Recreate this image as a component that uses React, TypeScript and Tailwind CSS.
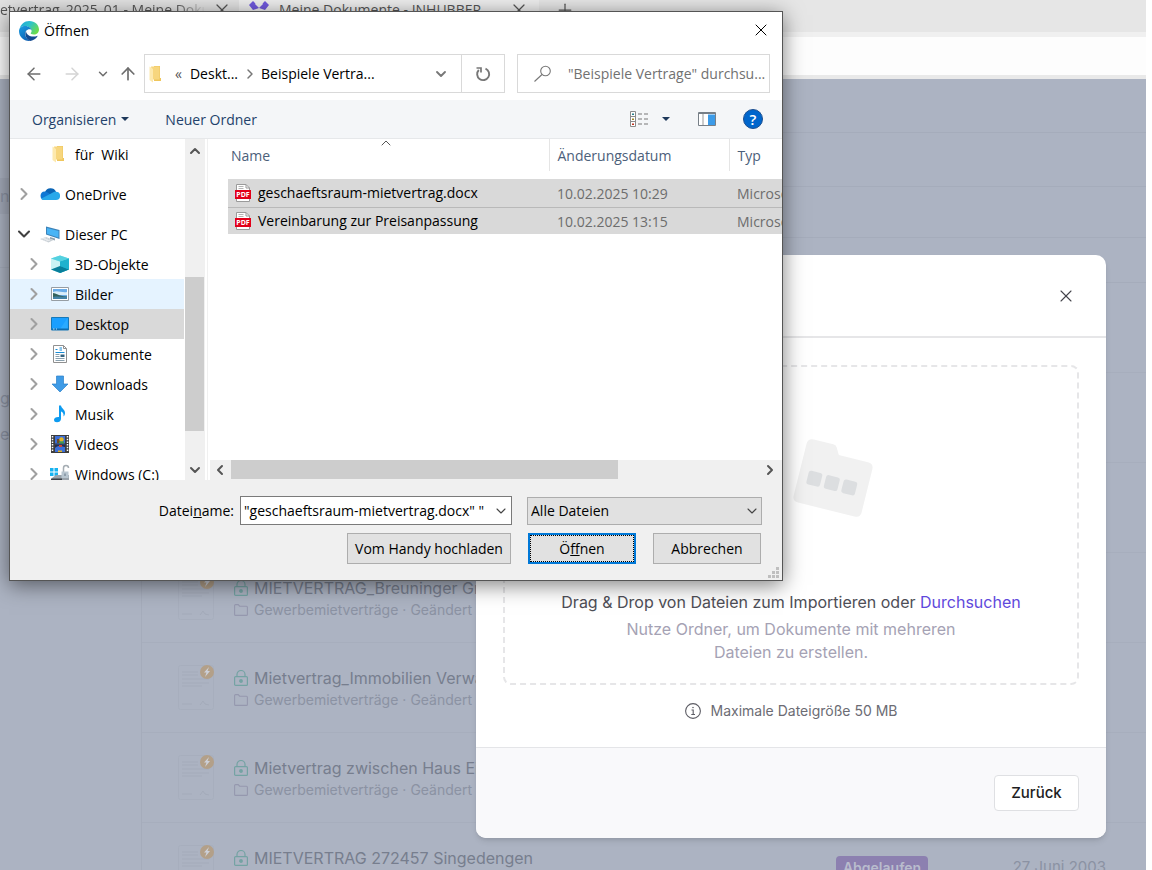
import React, { useState } from 'react';
import { X, Plus, ChevronDown, ChevronRight, ChevronUp, ChevronLeft, ArrowLeft, ArrowRight, ArrowUp } from 'lucide-react';

const documents = [
  { id: 1, title: '', folder: '' },
  { id: 2, title: '', folder: '' },
  { id: 3, title: '', folder: '' },
  { id: 4, title: 'MIETVERTRAG_Breuninger GmbH', folder: 'Gewerbemietverträge' },
  { id: 5, title: 'Mietvertrag_Immobilien Verwaltung', folder: 'Gewerbemietverträge' },
  { id: 6, title: 'Mietvertrag zwischen Haus Eins', folder: 'Gewerbemietverträge' },
  { id: 7, title: 'MIETVERTRAG 272457 Singedengen', folder: 'Gewerbemietverträge', status: 'Abgelaufen', date: '27 Juni 2003' },
];

const files = [
  { name: 'geschaeftsraum-mietvertrag.docx', date: '10.02.2025 10:29', type: 'Microsoft' },
  { name: 'Vereinbarung zur Preisanpassung', date: '10.02.2025 13:15', type: 'Microsoft' },
];

function EdgeIcon() {
  return (
    <svg className="h-5 w-5" viewBox="0 0 20 20">
      <defs>
        <linearGradient id="edge-top" x1="0" y1="0" x2="1" y2="0.6">
          <stop offset="0" stopColor="#1ea3dc" />
          <stop offset="0.5" stopColor="#2fc3c9" />
          <stop offset="1" stopColor="#6ddc4a" />
        </linearGradient>
        <linearGradient id="edge-left" x1="0" y1="0" x2="0.6" y2="1">
          <stop offset="0" stopColor="#1b9de2" />
          <stop offset="1" stopColor="#0f62b5" />
        </linearGradient>
      </defs>
      <path d="M.6 8C1.6 3.300 5.500 0 10.200 0 16 0 20 4 20 8.600c0 3-2.300 5-5.100 5-2.400 0-3.500-.9-3.200-1.500.4-.6.900-1 .9-2.100C12.600 7.400 9.600 5 6 5 3.600 5 1.500 6.200.6 8z" fill="url(#edge-top)" />
      <path d="M0 10C0 7 2.800 5 6.200 5c3.600 0 6.400 2.400 6.400 4.400-.5-1.500-3.800-1.600-5.600.6C5 12.600 6.300 18 11.500 19.900 5 20.600 0 16 0 10z" fill="url(#edge-left)" />
      <path d="M7 10c-1.800 3.500.1 8.500 4.500 9.900 3-.5 5.600-2 7-4.600.2-.4-.1-.6-.5-.4-1 .5-2.200.7-3.600.7-4 0-7.200-2.500-7.400-5.600z" fill="#154b91" />
    </svg>
  );
}

function YellowFolder() {
  return (
    <svg className="h-5 w-5 shrink-0" viewBox="0 0 20 20">
      <path d="M7 2h6v12h1v3H7z" fill="#efc65c" />
      <path d="M4 2.500h8.500v13H6z" fill="#f7d67e" />
      <path d="M2.500 2.500 6 5v13.500l-3.500-2.500z" fill="#fde9ae" />
    </svg>
  );
}

function CloudIcon() {
  return (
    <svg className="h-5 w-5 shrink-0" viewBox="0 0 20 20">
      <path d="M5 8a6 6 0 0 1 11-.5L11 13 3 9z" fill="#0a64b5" />
      <path d="M4.500 7.500c2 0 4.500 1.500 6 3L4 16a4.300 4.300 0 0 1 .5-8.500z" fill="#0f78d4" />
      <path d="M16 7.800a4.100 4.100 0 0 1 0 8.200H4c-1.300 0-2.300-.5-3-1.300L11.500 9.300c1-.8 2.500-1.500 4.500-1.500z" fill="#28a8ea" />
    </svg>
  );
}

function ComputerIcon() {
  return (
    <svg className="h-5 w-5 shrink-0" viewBox="0 0 20 20">
      <path d="M6 2.500 19.500 6v9L6 10.500z" fill="#3c82b8" />
      <path d="m7 4 11.500 3v6.500L7 9.800z" fill="#48b4f5" />
      <path d="m10 13 5 1.500v2l-5-1.500z" fill="#8da1ae" />
      <path d="m0 15 6-2 7.500 3-5 2.500z" fill="#c9d0d6" />
      <path d="m2 15 4-1M4 16l4-1M6 17l4-1" stroke="#fff" strokeWidth="0.6" />
    </svg>
  );
}

function CubeIcon() {
  return (
    <svg className="h-5 w-5 shrink-0" viewBox="0 0 20 20">
      <path d="m1 4.500 9-3 9 3v11l-9 3.500-9-3.500z" fill="#8be0e7" />
      <path d="m1 4.500 9 3V13l-9 2.500z" fill="#c9f3f5" />
      <path d="m19 4.500-9 3V19l9-3.500z" fill="#16a9c7" />
      <path d="m1 15.500 9-3.500 9 3.500-9 3.500z" fill="#087f9b" />
      <path d="m10 12 9 3.500v-11l-9 3z" fill="#1fb2ce" />
      <path d="m1 4.500 9-3 9 3-9 3z" fill="#54d1e0" />
    </svg>
  );
}

function PicturesIcon() {
  return (
    <svg className="h-5 w-5 shrink-0" viewBox="0 0 20 20">
      <path d="M1.500 3.500h17v13h-17z" fill="#fff" stroke="#969da3" />
      <path d="M3 5h14v10H3z" fill="#6aace8" />
      <path d="M3 8c4-2 9 1 14 0v3H3z" fill="#d9edf9" />
      <path d="M3 9c3 0 5 3 14 3.500V15H3z" fill="#34635c" />
      <path d="M3 13c4-1 9 0 14 0v2H3z" fill="#4383a7" />
    </svg>
  );
}

function DesktopIcon() {
  return (
    <svg className="h-5 w-5 shrink-0" viewBox="0 0 20 20">
      <path d="M1.500 3.500h17v12.500h-17z" fill="#1a9fff" stroke="#1678b8" />
      <path d="M10 15 17.500 4v11z" fill="#2aaaff" />
      <path d="M2 14.500h16v1.500H2z" fill="#0f6cae" />
      <path d="M3 15h1.500M6 15h1" stroke="#bfe4ff" />
    </svg>
  );
}

function DocumentIcon() {
  return (
    <svg className="h-5 w-5 shrink-0" viewBox="0 0 20 20">
      <path d="M3.500 1.500h10l3 3v14h-13z" fill="#fff" stroke="#909090" />
      <path d="M13.500 1.500v3h3" fill="none" stroke="#909090" />
      <path d="M5.500 5.500h2M9.500 4h2.500M9.500 6h2.500M5.500 8.500h9" stroke="#188cd6" strokeWidth="1.200" />
      <path d="M5.500 10.500h4M5.500 12.500h4M5.500 14.500h9M5.500 16.500h9" stroke="#8aa0ae" />
      <path d="M10.500 10.500h4v2.500h-4z" fill="#35627f" />
    </svg>
  );
}

function DownloadIcon() {
  return (
    <svg className="h-5 w-5 shrink-0" viewBox="0 0 20 20">
      <path d="M6.500 2h7v8H18l-8 8-8-8h4.500z" fill="#3f9be6" stroke="#2a80c8" strokeWidth="0.700" />
    </svg>
  );
}

function MusicIcon() {
  return (
    <svg className="h-5 w-5 shrink-0" viewBox="0 0 20 20">
      <path d="M9 1.500h2c.3 3 4.500 4 4 8-.2 1.500-1 2.500-1.500 3 .5-3-1-4.500-2.500-5V15c0 2-2 3.300-4 3.300S4 17.500 4 15.800C4 14 6 12.800 9 13z" fill="#0d9bf0" />
    </svg>
  );
}

function VideoIcon() {
  return (
    <svg className="h-5 w-5 shrink-0" viewBox="0 0 20 20">
      <path d="M1 1h18v18H1z" fill="#3d3d3d" />
      <path d="M2.500 2v16M17.500 2v16" stroke="#fff" strokeWidth="1.500" strokeDasharray="1.500 1.200" />
      <path d="M5 2h10v7.500H5zM5 10.500h10V18H5z" fill="#3c6fd8" />
      <path d="M7 5h3v4H7z" fill="#6b4b2a" />
      <circle cx="11.500" cy="5.500" r="2.200" fill="#e4b526" />
      <path d="M9 7.500h5v2H9z" fill="#3f9b4b" />
      <path d="M5 14c3-3 6-2 10-1v-2.500H5z" fill="#272d4b" />
      <path d="M9 11h3v2H9z" fill="#d24532" />
      <path d="M8 16.500h4V18H8z" fill="#e4b526" />
    </svg>
  );
}

function DriveIcon() {
  return (
    <svg className="h-5 w-5 shrink-0" viewBox="0 0 20 20">
      <path d="M0 4h3.500v3.500H0zM4.500 4H8v3.500H4.500zM0 8.500h3.500V12H0zM4.500 8.500H8V12H4.500z" fill="#17b3f0" />
      <path d="M2 14 6 11h13v6H2z" fill="#9aa3ab" />
      <path d="M1 14.500h11V18H1z" fill="#3b4046" />
      <path d="M13.500 8V4a2.500 2.500 0 0 1 5 0" fill="none" stroke="#a5adb3" strokeWidth="1.500" />
      <path d="M11.500 7.500h7V14h-7z" fill="#b9c6d0" />
      <path d="M14.500 9.500h1v2.500h-1z" fill="#667785" />
    </svg>
  );
}

function PdfIcon() {
  return (
    <svg className="h-[18px] w-4 shrink-0" viewBox="0 0 16 18">
      <path d="M1.500.5h9.500l3.500 3.500v13.500h-13z" fill="#fff" stroke="#9a9a9a" />
      <path d="M11 .5V4h3.500" fill="none" stroke="#9a9a9a" />
      <path d="M3.500 2.500h5M3.500 4.500h5" stroke="#b5b5b5" />
      <path d="M0 6h16v9H0z" fill="#e2001a" />
      <text x="8" y="13" fill="#fff" fontSize="7" fontWeight="700" textAnchor="middle" fontFamily="Open Sans, sans-serif">PDF</text>
    </svg>
  );
}

function LockIcon() {
  return (
    <svg className="h-4 w-3.5 shrink-0" viewBox="0 0 14 16" fill="none" stroke="#74a3a3" strokeWidth="1.200">
      <rect x="0.600" y="6.600" width="12.800" height="8.800" rx="1" />
      <path d="M3 6.500V4.500a4 4 0 0 1 8 0v2" />
      <circle cx="7" cy="11" r="1.300" fill="#74a3a3" />
    </svg>
  );
}

function FolderIcon() {
  return (
    <svg className="h-3 w-3.5 shrink-0" viewBox="0 0 14 12" fill="none" stroke="#9598ae" strokeWidth="1.100">
      <path d="M.6 10.400V1.600q0-1 1-1h2.600l1.400 1.600h6.800q1 0 1 1v7.200q0 1-1 1H1.600q-1 0-1-1z" />
    </svg>
  );
}

function InfoIcon() {
  return (
    <svg className="h-4 w-4 shrink-0" viewBox="0 0 16 16" fill="none" stroke="#5c5c64">
      <circle cx="8" cy="8" r="7.400" strokeWidth="1.100" />
      <path d="M6.500 7h1.700v4.500M6.300 11.500h3.700" strokeWidth="1.100" />
      <circle cx="8" cy="4.600" r="0.500" fill="#5c5c64" strokeWidth="0.500" />
    </svg>
  );
}

function ReloadIcon() {
  return (
    <svg className="h-4 w-4" viewBox="0 0 16 16" fill="none" stroke="#777" strokeWidth="1.900">
      <path d="M10.500 2.600A6 6 0 1 1 3.800 4" />
      <path d="M1.500 2H6v4.500" strokeWidth="1.700" />
    </svg>
  );
}

function Thumbnail() {
  return (
    <svg className="h-[45px] w-9 shrink-0" viewBox="0 0 36 45">
      <rect x="0.500" y="0.500" width="35" height="44" rx="2" fill="none" stroke="#a7aebd" />
      <path d="M4 7h16M4 10h16M4 14h27M4 18h27M4 21h20M4 39h10M22 40l3-4 2 3 4 1" fill="none" stroke="#a4abba" />
      <circle cx="29" cy="7" r="7" fill="#b3a089" />
      <path d="m31 2-5 5.500h2.500L27 12l5-6h-2.500z" fill="#cdd1da" />
    </svg>
  );
}

const treeItems = [
  { label: '3D-Objekte', icon: CubeIcon, row: 'bg-white' },
  { label: 'Bilder', icon: PicturesIcon, row: 'bg-[#e5f3ff]' },
  { label: 'Desktop', icon: DesktopIcon, row: 'bg-[#d9d9d9]' },
  { label: 'Dokumente', icon: DocumentIcon, row: 'bg-white' },
  { label: 'Downloads', icon: DownloadIcon, row: 'bg-white' },
  { label: 'Musik', icon: MusicIcon, row: 'bg-white' },
  { label: 'Videos', icon: VideoIcon, row: 'bg-white' },
  { label: 'Windows (C:)', icon: DriveIcon, row: 'bg-white' },
];

function BrowserBar() {
  return (
    <header className="bg-[#e6e6e6] text-[14px] text-[#555] font-['Open_Sans',sans-serif]">
      <div className="flex h-8 items-start">
        <div className="flex h-full w-[239px] items-start bg-[#e2e2e2]">
          <span className="w-[206px] overflow-hidden whitespace-nowrap leading-5 [mask-image:linear-gradient(to_right,black_85%,transparent)]">
            etvertrag_2025_01 - Meine Dokumente
          </span>
          <button aria-label="Tab schließen" className="ml-1.5"><X className="h-5 w-5" strokeWidth={1.5} /></button>
        </div>
        <div className="flex h-full w-[300px] items-start bg-[#eeeeee] pl-2">
          <svg className="h-5 w-6 shrink-0" viewBox="0 0 24 20">
            <path d="m2 5 4-4 6 6 6-6 4 4-4 5-6-2-6 2z" fill="#7059dd" />
            <path d="m8 4 4-4 4 4-4 4z" fill="#eee" />
          </svg>
          <span className="ml-2 grow whitespace-nowrap leading-5">Meine Dokumente - INHUBBER</span>
          <button aria-label="Tab schließen" className="mr-2.5"><X className="h-5 w-5" strokeWidth={1.5} /></button>
        </div>
        <button aria-label="Neuer Tab" className="ml-4"><Plus className="h-5 w-5" strokeWidth={1.5} /></button>
      </div>
      <div className="h-[47px] border-t-[5px] border-b-4 border-t-[#f0f0f0] border-b-[#e9e9e9] bg-[#fdfdfd]" />
    </header>
  );
}

function DocumentList() {
  return (
    <main className="min-w-0 grow">
      <div className="h-[54px] border-b border-[#a5acbb]" />
      <div className="h-[54px] border-b border-[#a5acbb]" />
      <div className="h-[51px] border-b border-[#a5acbb]" />
      <div className="h-[45px] border-b border-[#a5acbb]" />
      {documents.map((doc) => (
        <div key={doc.id} className="flex h-[90px] items-center border-b border-[#a7aebd] pr-10 pl-9">
          {doc.title && (
            <>
              <Thumbnail />
              <div className="ml-5 min-w-0 grow whitespace-nowrap">
                <div className="flex items-center gap-1.5 text-[16px] leading-6 text-[#777e8e]">
                  <LockIcon />
                  {doc.title}
                </div>
                <div className="flex items-center gap-1.5 text-[14px] leading-5 text-[#8b92a3]">
                  <FolderIcon />
                  <span>{doc.folder}</span>
                  <span className="-mx-0.5">·</span>
                  <span>Geändert</span>
                </div>
              </div>
              {doc.status && (
                <span className="flex h-6 w-[92px] shrink-0 items-center justify-center rounded bg-[#8c80b0] text-[14px] font-semibold text-[#b9bccd]">
                  {doc.status}
                </span>
              )}
              {doc.date && <span className="w-[178px] shrink-0 text-right text-[15px] text-[#8b92a3]">{doc.date}</span>}
            </>
          )}
        </div>
      ))}
    </main>
  );
}

function ImportModal() {
  return (
    <section className="absolute top-[255px] right-[46px] w-[630px] overflow-hidden rounded-[10px] bg-white text-[16px] shadow-md">
      <div className="flex h-[83px] items-center justify-end border-b-2 border-[#e6e6e8] px-[30px]">
        <button aria-label="Schließen" className="text-[#45454c]"><X className="h-5 w-5" strokeWidth={1.3} /></button>
      </div>
      <div className="px-[27px] pt-[27px] pb-6">
        <div className="flex flex-col items-center rounded-lg border-2 border-dashed border-[#e6e6e8] pt-[72px] pb-[19px]">
          <svg className="ml-[84px] h-20 w-[82px]" viewBox="0 0 82 80">
            <g transform="translate(16 -1) rotate(14)">
              <path d="M0 6q0-6 6-6h20q3 0 4 2l4 7h30q6 0 6 6v44q0 6-6 6H6q-6 0-6-6z" fill="#f1f1f1" />
              <rect x="9" y="31" width="14" height="14" rx="2.500" fill="#dcdee0" />
              <rect x="27" y="31" width="14" height="14" rx="2.500" fill="#dcdee0" />
              <rect x="45" y="31" width="14" height="14" rx="2.500" fill="#dcdee0" />
            </g>
          </svg>
          <p className="mt-[71px] leading-6 text-[#4e4e56]">
            Drag &amp; Drop von Dateien zum Importieren oder <a href="#" className="text-[#5f49dc]">Durchsuchen</a>
          </p>
          <p className="mt-1 w-[350px] text-center leading-[23px] text-[#a5a2b4]">
            Nutze Ordner, um Dokumente mit mehreren Dateien zu erstellen.
          </p>
        </div>
        <p className="mt-3.5 flex items-center justify-center gap-2.5 text-[14px] leading-6 text-[#6c6c74]">
          <InfoIcon />
          Maximale Dateigröße 50 MB
        </p>
      </div>
      <div className="flex h-[91px] items-center justify-end border-t border-[#e4e5e8] bg-[#f9f9fb] px-[27px]">
        <button className="h-9 w-[85px] rounded border border-[#dfe0e3] bg-white text-[15px] font-medium text-[#1d1d22]">Zurück</button>
      </div>
    </section>
  );
}

function FileDialog() {
  const [fileName, setFileName] = useState('"geschaeftsraum-mietvertrag.docx" "');

  return (
    <section className="absolute top-[11px] left-[9px] w-[774px] border border-[#555] bg-white text-[14px] text-black shadow-[0_4px_20px_rgba(0,0,0,0.5)] font-['Open_Sans',sans-serif]">
      {/* Title bar */}
      <div className="flex h-[42px] items-start justify-between pt-2 pr-[11px] pl-[9px]">
        <h1 className="flex items-center gap-[5px]"><EdgeIcon /> Öffnen</h1>
        <button aria-label="Schließen"><X className="h-5 w-5" strokeWidth={1.2} /></button>
      </div>

      {/* Address bar and search */}
      <div className="flex h-[46px] items-start pr-3 pl-3.5">
        <div className="flex h-[39px] w-[120px] shrink-0 items-center text-[#6d6d6d]">
          <button aria-label="Zurück"><ArrowLeft className="h-5 w-5" strokeWidth={1.8} /></button>
          <button aria-label="Vorwärts" className="ml-[18px] text-[#d4d4d4]"><ArrowRight className="h-5 w-5" strokeWidth={1.8} /></button>
          <button aria-label="Zuletzt besucht" className="ml-3.5"><ChevronDown className="h-3.5 w-3.5" strokeWidth={2.5} /></button>
          <button aria-label="Nach oben" className="ml-2"><ArrowUp className="h-5 w-5" strokeWidth={2} /></button>
        </div>
        <div className="flex h-[39px] w-[361px] shrink-0 border border-[#d9d9d9]">
          <div className="flex grow items-center whitespace-nowrap pl-0.5">
            <YellowFolder />
            <span className="ml-2 text-[#555]">«</span>
            <span className="ml-2">Deskt...</span>
            <ChevronRight className="mr-[3px] ml-1 h-4 w-4 text-[#777]" strokeWidth={2.2} />
            <span>Beispiele Vertra...</span>
            <button aria-label="Vorherige Orte" className="mr-3 ml-auto text-[#777]"><ChevronDown className="h-4 w-4" strokeWidth={2.8} /></button>
          </div>
          <button aria-label="Aktualisieren" className="flex w-[43px] items-center justify-center border-l border-[#d9d9d9]">
            <ReloadIcon />
          </button>
        </div>
        <label className="ml-3 flex h-[39px] min-w-0 grow items-center border border-[#d9d9d9] pl-4">
          <svg className="h-[18px] w-[18px] shrink-0" viewBox="0 0 18 18" fill="none" stroke="#777" strokeWidth="1.100">
            <circle cx="11.500" cy="6" r="4.800" />
            <path d="m8 9.500-7.500 7" />
          </svg>
          <input
            aria-label="Suchen"
            placeholder={'"Beispiele Vertrage" durchsu...'}
            className="ml-4 min-w-0 grow outline-none placeholder:text-[#717171]"
          />
        </label>
      </div>

      {/* Toolbar */}
      <div className="flex h-[39px] items-center border-b border-[#e6e8ea] bg-[#f4f6f8] pr-[19px] pl-[22px] text-[#23426b]">
        <button className="flex items-center gap-[5px]">
          Organisieren
          <svg className="h-1 w-2" viewBox="0 0 8 4"><path d="M0 0h8L4 4z" fill="#1e395b" /></svg>
        </button>
        <button className="ml-9">Neuer Ordner</button>
        <button aria-label="Ansicht" className="ml-auto flex items-center gap-3">
          <svg className="h-4 w-5" viewBox="0 0 20 16" fill="none">
            <path d="M.5.5h5v15h-5zM.5 5.500h5M.5 10.500h5" fill="#fff" stroke="#8b8b8b" />
            <path d="M8 3h4M14 3h4M8 8h4M14 8h4M8 13h4M14 13h4" stroke="#777" />
            <path d="M2 2.500h2v1.500H2z" fill="#287f8c" />
            <path d="M2 7.500h2V9H2z" fill="#a08728" />
            <path d="M2 12.500h2V14H2z" fill="#c03420" />
          </svg>
          <svg className="h-1 w-2" viewBox="0 0 8 4"><path d="M0 0h8L4 4z" fill="#1e395b" /></svg>
        </button>
        <button aria-label="Vorschaufenster" className="ml-7">
          <svg className="h-3.5 w-[18px]" viewBox="0 0 18 14">
            <path d="M.5.5h17v13H.5z" fill="#fff" stroke="#777f87" />
            <path d="M1 1.500h16" stroke="#777f87" />
            <path d="M5 2v11" stroke="#999" />
            <path d="M10 2.500h7V13h-7z" fill="#3c9be8" />
          </svg>
        </button>
        <button aria-label="Hilfe" className="ml-[27px] flex h-5 w-5 items-center justify-center rounded-full border border-[#1d4f8f] bg-[#0066cc] text-[15px] leading-none font-semibold text-white">?</button>
      </div>

      <div className="flex h-[341px]">
        {/* Folder tree */}
        <nav className="h-full w-[174px] shrink-0 overflow-hidden whitespace-nowrap">
          <div className="mb-2.5 flex h-[30px] items-center gap-[5px] pl-10"><YellowFolder /> <span className="whitespace-pre">für  Wiki</span></div>
          <div className="mb-2.5 flex h-[30px] items-center pl-1">
            <ChevronRight className="h-5 w-5 text-[#a0a0a0]" strokeWidth={2.5} />
            <span className="ml-1.5 flex items-center gap-[5px]"><CloudIcon /> OneDrive</span>
          </div>
          <div className="flex h-[30px] items-center pl-1">
            <ChevronDown className="h-5 w-5 text-[#404040]" strokeWidth={2.5} />
            <span className="ml-1.5 flex items-center gap-[5px]"><ComputerIcon /> Dieser PC</span>
          </div>
          {treeItems.map(({ label, icon: Icon, row }) => (
            <div key={label} className={`flex h-[30px] items-center pl-3.5 ${row}`}>
              <ChevronRight className="h-5 w-5 text-[#a0a0a0]" strokeWidth={2.5} />
              <span className="ml-1.5 flex items-center gap-[5px]"><Icon /> {label}</span>
            </div>
          ))}
        </nav>
        <div className="ml-px flex w-5 shrink-0 flex-col items-center bg-[#f0f0f0] text-[#555]">
          <ChevronUp className="my-1 h-4 w-4" strokeWidth={3} />
          <div className="mt-[114px] h-[154px] w-[19px] self-start bg-[#cdcdcd]" />
          <ChevronDown className="mt-auto mb-0.5 h-4 w-4" strokeWidth={3} />
        </div>

        {/* File list */}
        <div className="ml-0.5 flex min-w-0 grow flex-col border-l border-[#f0f0f0]">
          <div className="grow overflow-hidden pl-5">
            <table className="w-[620px] table-fixed border-collapse text-left whitespace-nowrap">
              <thead>
                <tr className="h-8 text-[#4c607a]">
                  <th className="relative w-[321px] border-r border-[#e5e5e5] pl-[3px] font-normal">
                    Name
                    <ChevronUp className="absolute -top-1 left-[150px] h-4 w-4 text-[#555]" strokeWidth={1.5} />
                  </th>
                  <th className="w-[180px] border-r border-[#e5e5e5] pl-2 font-normal">Änderungsdatum</th>
                  <th className="pl-2 font-normal">Typ</th>
                </tr>
              </thead>
              <tbody>
                <tr className="h-2"><td colSpan={3} /></tr>
                {files.map((file) => (
                  <tr key={file.name} className="h-7 border-b border-[#b9b9b9] bg-[#d9d9d9] text-[#6d6d6d] last:h-[27px] last:border-b-0">
                    <td className="pt-px pl-[7px] text-black">
                      <span className="flex items-center gap-[7px] leading-5"><PdfIcon /> {file.name}</span>
                    </td>
                    <td className="pt-px pl-2">{file.date}</td>
                    <td className="pt-px pl-2">{file.type}</td>
                  </tr>
                ))}
              </tbody>
            </table>
          </div>
          <div className="ml-0.5 flex h-5 shrink-0 items-center bg-[#f0f0f0] text-[#555]">
            <ChevronLeft className="mr-[3px] ml-0.5 h-4 w-4" strokeWidth={3} />
            <div className="h-[19px] w-[387px] self-start bg-[#cdcdcd]" />
            <ChevronRight className="mr-1 ml-auto h-4 w-4" strokeWidth={3} />
          </div>
        </div>
      </div>

      {/* File name and actions */}
      <div className="relative bg-[#f0f0f0] pt-4 pr-5 pb-4">
        <div className="flex items-center justify-end">
          <label htmlFor="file-name" className="mr-1.5">Datei<u>n</u>ame:</label>
          <div className="flex h-[29px] w-[272px] items-center border border-[#7a7a7a] bg-white">
            <input
              id="file-name"
              value={fileName}
              onChange={(e) => setFileName(e.target.value)}
              className="min-w-0 grow pl-[3px] outline-none"
            />
            <button aria-label="Letzte Dateien" className="mr-0.5 text-[#444]"><ChevronDown className="h-4 w-4" strokeWidth={1.6} /></button>
          </div>
          <div className="relative ml-[15px]">
            <select aria-label="Dateityp" className="h-7 w-[235px] appearance-none border border-[#adadad] bg-[#e1e1e1] pl-[3px]">
              <option>Alle Dateien</option>
            </select>
            <ChevronDown className="pointer-events-none absolute top-1.5 right-0.5 h-4 w-4 text-[#444]" strokeWidth={1.6} />
          </div>
        </div>
        <div className="mt-2 flex justify-end gap-[17px] pr-px">
          <button className="h-[31px] w-[164px] border border-[#adadad] bg-[#e1e1e1] whitespace-nowrap">Vom Handy hochladen</button>
          <button className="h-[31px] w-[108px] border-2 border-[#0078d7] bg-[#e1e1e1] outline-1 -outline-offset-3 outline-dotted outline-black">Ö<u>f</u>fnen</button>
          <button className="h-[31px] w-[108px] border border-[#adadad] bg-[#e1e1e1]">Abbrechen</button>
        </div>
        <svg className="absolute right-[3px] bottom-0.5 h-[11px] w-[11px]" viewBox="0 0 11 11" fill="#bfbfbf">
          <path d="M8 0h3v3H8zM4 4h3v3H4zM8 4h3v3H8zM0 8h3v3H0zM4 8h3v3H4zM8 8h3v3H8z" />
        </svg>
      </div>
    </section>
  );
}

export default function App() {
  return (
    <div className="relative h-screen overflow-hidden bg-white font-['Inter',sans-serif]">
      <div className="mr-1.5">
        <BrowserBar />
        <div className="flex bg-[#acb3c2]">
          <aside className="w-[142px] shrink-0 border-r border-[#a5acbb] text-[16px] text-[#8c93a4]">
            <div className="mt-[99px] flex h-9 items-center bg-[#a4abba]">nte</div>
            <div className="mt-[53px] border-t border-[#a5acbb]" />
            <div className="mt-[112px] leading-9">ge</div>
            <div className="leading-9">en</div>
          </aside>
          <DocumentList />
        </div>
      </div>
      <ImportModal />
      <FileDialog />
    </div>
  );
}
